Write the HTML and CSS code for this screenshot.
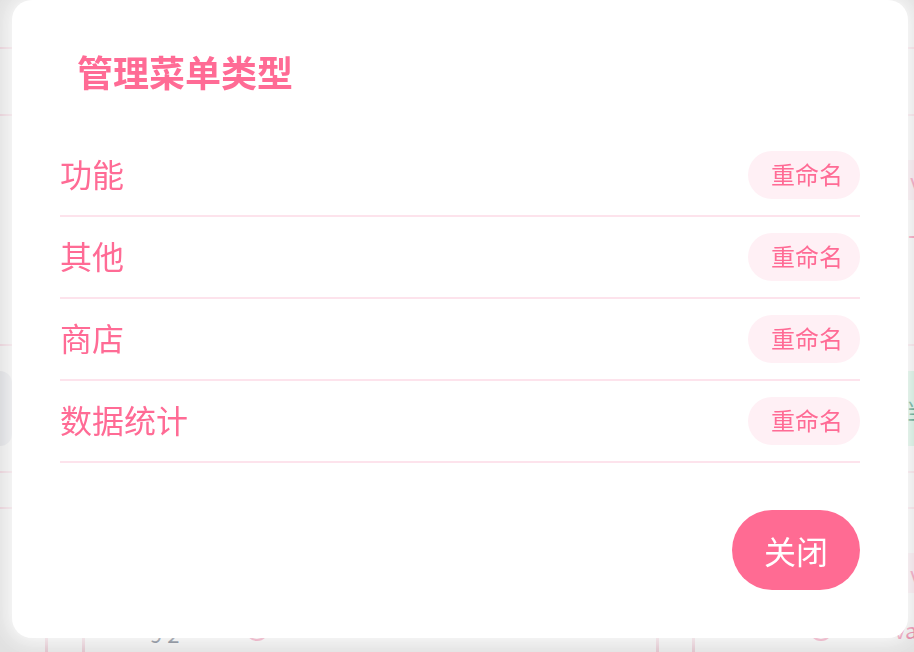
FILE: index.html
```html
<!DOCTYPE html>
<html lang="zh-CN">
<head>
<meta charset="utf-8">
<title>管理菜单类型</title>
<link rel="stylesheet" href="styles.css">
</head>
<body>
<div class="page">
  <div class="bg-row bg-head"></div>
  <div class="bg-row bg-a"></div>
  <div class="bg-row bg-b">
    <div class="bg-side-left"></div>
    <div class="bg-side-right">
      <span class="bg-tag pink">view</span>
      <span class="bg-plus">+</span>
    </div>
  </div>
  <div class="bg-row bg-c">
    <div class="bg-gray-btn"></div>
    <span class="bg-tag green">当前</span>
  </div>
  <div class="bg-row bg-d"></div>
  <div class="bg-row bg-e">
    <div class="bg-side-left"></div>
    <div class="bg-side-right">
      <span class="bg-tag pink">view</span>
      <span class="bg-val">value</span>
    </div>
  </div>
  <div class="bg-cells">
    <span class="bg-cell c1"></span>
    <span class="bg-cell c2"></span>
    <span class="bg-dark">9 2</span>
    <span class="bg-ring"></span>
    <span class="bg-cell c3"></span>
    <span class="bg-cell c4"></span>
    <span class="bg-ring r2"></span>
  </div>
</div>

<div class="overlay">
  <div class="modal">
    <h2 class="modal-title">管理菜单类型</h2>
    <ul class="type-list">
      <li class="type-row"><span class="type-name">功能</span><button class="rename-btn">重命名</button></li>
      <li class="type-row"><span class="type-name">其他</span><button class="rename-btn">重命名</button></li>
      <li class="type-row"><span class="type-name">商店</span><button class="rename-btn">重命名</button></li>
      <li class="type-row"><span class="type-name">数据统计</span><button class="rename-btn">重命名</button></li>
    </ul>
    <div class="modal-footer">
      <button class="close-btn">关闭</button>
    </div>
  </div>
</div>
</body>
</html>
```

FILE: styles.css
```css
html, body {
  margin: 0;
  padding: 0;
  height: 100%;
  overflow: hidden;
}

body {
  font-family: "Noto Sans CJK SC", "Noto Sans", sans-serif;
  background: #fafafa;
}

/* ---------- background page (mostly hidden) ---------- */
.page {
  width: 914px;
  height: 652px;
  overflow: hidden;
}

.bg-row {
  display: flex;
  justify-content: space-between;
  align-items: flex-start;
  border-bottom: 2px solid #f9dce6;
}

.bg-head { height: 47px; }
.bg-a { height: 65px; }
.bg-b { height: 228px; }
.bg-c { height: 125px; align-items: center; }
.bg-d { height: 34px; }
.bg-e { height: 130px; border-bottom: none; }

.bg-side-right {
  display: flex;
  flex-direction: column;
  align-items: flex-start;
  width: 6px;
  overflow: visible;
  padding-top: 44px;
}

.bg-tag {
  display: flex;
  align-items: center;
  height: 40px;
  padding: 0 2px;
  font-size: 22px;
  white-space: nowrap;
}

.bg-tag.pink {
  background: #fbe6ee;
  color: #f57ca4;
}

.bg-tag.green {
  background: #cdf3df;
  color: #12805a;
  height: 75px;
  width: 6px;
  overflow: hidden;
}

.bg-plus {
  margin-top: 20px;
  color: #f47aa3;
  font-size: 28px;
  line-height: 30px;
}

.bg-val {
  margin-top: 24px;
  color: #f47aa3;
  font-size: 22px;
  line-height: 24px;
  margin-left: -14px;
}

.bg-gray-btn {
  width: 12px;
  height: 75px;
  background: #e9eaee;
  border-radius: 0 14px 14px 0;
}

.bg-cells {
  display: flex;
  align-items: flex-start;
  height: 40px;
  margin-top: -20px;
}

.bg-cell {
  width: 3px;
  height: 40px;
  background: #f3d2dc;
}

.c1 { margin-left: 45px; }
.c2 { margin-left: 34px; }
.c3 { margin-left: 387px; }
.c4 { margin-left: 33px; }

.bg-dark {
  width: 70px;
  margin-left: 65px;
  color: #4a5568;
  font-size: 22px;
  line-height: 28px;
  white-space: nowrap;
}

.bg-ring {
  margin-left: 25px;
  width: 20px;
  height: 20px;
  border: 2px solid #f080a6;
  border-radius: 50%;
  margin-top: -2px;
}

.bg-ring.r2 { margin-left: 114px; }

/* ---------- overlay & modal ---------- */
.overlay {
  position: fixed;
  inset: 0;
  background: rgba(0, 0, 0, 0.1);
  display: flex;
  align-items: flex-start;
  padding-left: 12px;
}

.modal {
  width: 896px;
  box-sizing: border-box;
  padding: 44px 48px 48px;
  background: #ffffff;
  border-radius: 20px;
  box-shadow: 0 0 18px 6px rgba(255, 255, 255, 0.75);
}

.modal-title {
  margin: 0 0 0 17px;
  font-size: 36px;
  line-height: 54px;
  font-weight: 700;
  color: #ff6b95;
}

.type-list {
  list-style: none;
  margin: 37px 0 0;
  padding: 0;
}

.type-row {
  display: flex;
  align-items: center;
  justify-content: space-between;
  height: 80px;
  border-bottom: 2px solid #fde3ec;
}

.type-name {
  font-size: 32px;
  line-height: 1;
  padding-bottom: 4px;
  color: #ff6b95;
}

.rename-btn {
  height: 48px;
  padding: 0 17px 2px 23px;
  border: none;
  border-radius: 24px;
  background: #fff0f5;
  color: #ff6b95;
  font-family: inherit;
  font-size: 24px;
  line-height: 1;
}

.modal-footer {
  display: flex;
  justify-content: flex-end;
  margin-top: 47px;
}

.close-btn {
  width: 128px;
  height: 80px;
  border: none;
  border-radius: 40px;
  background: #ff6b93;
  color: #ffffff;
  font-family: inherit;
  font-size: 32px;
  line-height: 1;
}
```
